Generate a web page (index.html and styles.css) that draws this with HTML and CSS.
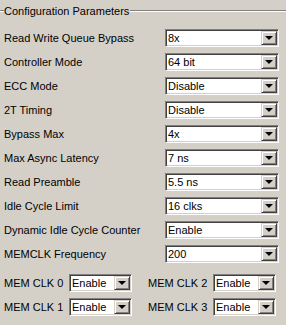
FILE: index.html
```html
<!DOCTYPE html>
<html lang="en">
  <head>
    <meta charset="UTF-8" />
    <meta name="viewport" content="width=device-width, initial-scale=1.0" />
    <title>Configuration Parameters</title>
    <link rel="stylesheet" href="styles.css">
  </head>
  <body>
    <div class="group">
      <div class="group-title">
        <span class="etch etch-short"></span>
        <span class="title-text">Configuration Parameters</span>
        <span class="etch etch-long"></span>
      </div>

      <div class="params">
        <div class="row">
          <span class="label">Read Write Queue Bypass</span>
          <div class="combo wide"><span class="value">8x</span><span class="arrow"></span></div>
        </div>
        <div class="row">
          <span class="label">Controller Mode</span>
          <div class="combo wide"><span class="value">64 bit</span><span class="arrow"></span></div>
        </div>
        <div class="row">
          <span class="label">ECC Mode</span>
          <div class="combo wide"><span class="value">Disable</span><span class="arrow"></span></div>
        </div>
        <div class="row">
          <span class="label">2T Timing</span>
          <div class="combo wide"><span class="value">Disable</span><span class="arrow"></span></div>
        </div>
        <div class="row">
          <span class="label">Bypass Max</span>
          <div class="combo wide"><span class="value">4x</span><span class="arrow"></span></div>
        </div>
        <div class="row">
          <span class="label">Max Async Latency</span>
          <div class="combo wide"><span class="value">7 ns</span><span class="arrow"></span></div>
        </div>
        <div class="row">
          <span class="label">Read Preamble</span>
          <div class="combo wide"><span class="value">5.5 ns</span><span class="arrow"></span></div>
        </div>
        <div class="row">
          <span class="label">Idle Cycle Limit</span>
          <div class="combo wide"><span class="value">16 clks</span><span class="arrow"></span></div>
        </div>
        <div class="row">
          <span class="label">Dynamic Idle Cycle Counter</span>
          <div class="combo wide"><span class="value">Enable</span><span class="arrow"></span></div>
        </div>
        <div class="row">
          <span class="label">MEMCLK Frequency</span>
          <div class="combo wide"><span class="value">200</span><span class="arrow"></span></div>
        </div>
      </div>

      <div class="clocks">
        <div class="clock">
          <span class="clock-label">MEM CLK 0</span>
          <div class="combo small"><span class="value">Enable</span><span class="arrow"></span></div>
        </div>
        <div class="clock">
          <span class="clock-label">MEM CLK 2</span>
          <div class="combo small"><span class="value">Enable</span><span class="arrow"></span></div>
        </div>
        <div class="clock">
          <span class="clock-label">MEM CLK 1</span>
          <div class="combo small"><span class="value">Enable</span><span class="arrow"></span></div>
        </div>
        <div class="clock">
          <span class="clock-label">MEM CLK 3</span>
          <div class="combo small"><span class="value">Enable</span><span class="arrow"></span></div>
        </div>
      </div>
    </div>
  </body>
</html>
```

FILE: styles.css
```css
* {
  padding: 0;
  margin: 0;
  box-sizing: border-box;
}

body {
  background: #d4d0c8;
  font-family: 'Liberation Sans', Arial, sans-serif;
  font-size: 11px;
  color: #000;
  width: 286px;
  height: 325px;
  overflow: hidden;
}

.group {
  padding-top: 4px;
}

.group-title {
  display: flex;
  align-items: center;
  height: 14px;
}

.etch {
  height: 2px;
  border-top: 1px solid #808080;
  border-bottom: 1px solid #fff;
}

.etch-short {
  width: 4px;
}

.etch-long {
  flex-grow: 1;
}

.title-text {
  padding: 0 1px 0 0;
}

.params {
  display: flex;
  flex-direction: column;
  gap: 6px;
  padding: 11px 0 0 4px;
}

.row {
  display: flex;
  align-items: center;
  height: 18px;
}

.label {
  width: 161px;
}

.combo {
  display: flex;
  align-items: center;
  height: 18px;
  background: #fff;
  border: 1px solid;
  border-color: #808080 #fff #fff #808080;
  box-shadow: inset 1px 1px 0 #404040, inset -1px -1px 0 #d4d0c8;
  padding: 2px 2px 2px 2px;
}

.combo.wide {
  width: 114px;
}

.combo.small {
  width: 63px;
}

.value {
  flex-grow: 1;
  line-height: 12px;
}

.arrow {
  position: relative;
  width: 16px;
  height: 14px;
  margin-right: -1px;
  background: #d4d0c8;
  border: 1px solid;
  border-color: #d4d0c8 #404040 #404040 #d4d0c8;
  box-shadow: inset 1px 1px 0 #fff, inset -1px -1px 0 #808080;
}

.arrow::after {
  content: '';
  position: absolute;
  left: 3px;
  top: 4px;
  border-left: 4px solid transparent;
  border-right: 4px solid transparent;
  border-top: 4px solid #000;
}

.clocks {
  display: grid;
  grid-template-columns: 144px 138px;
  row-gap: 6px;
  padding: 11px 0 0 4px;
}

.clock {
  display: flex;
  align-items: center;
  height: 18px;
}

.clock-label {
  width: 65px;
}
```
